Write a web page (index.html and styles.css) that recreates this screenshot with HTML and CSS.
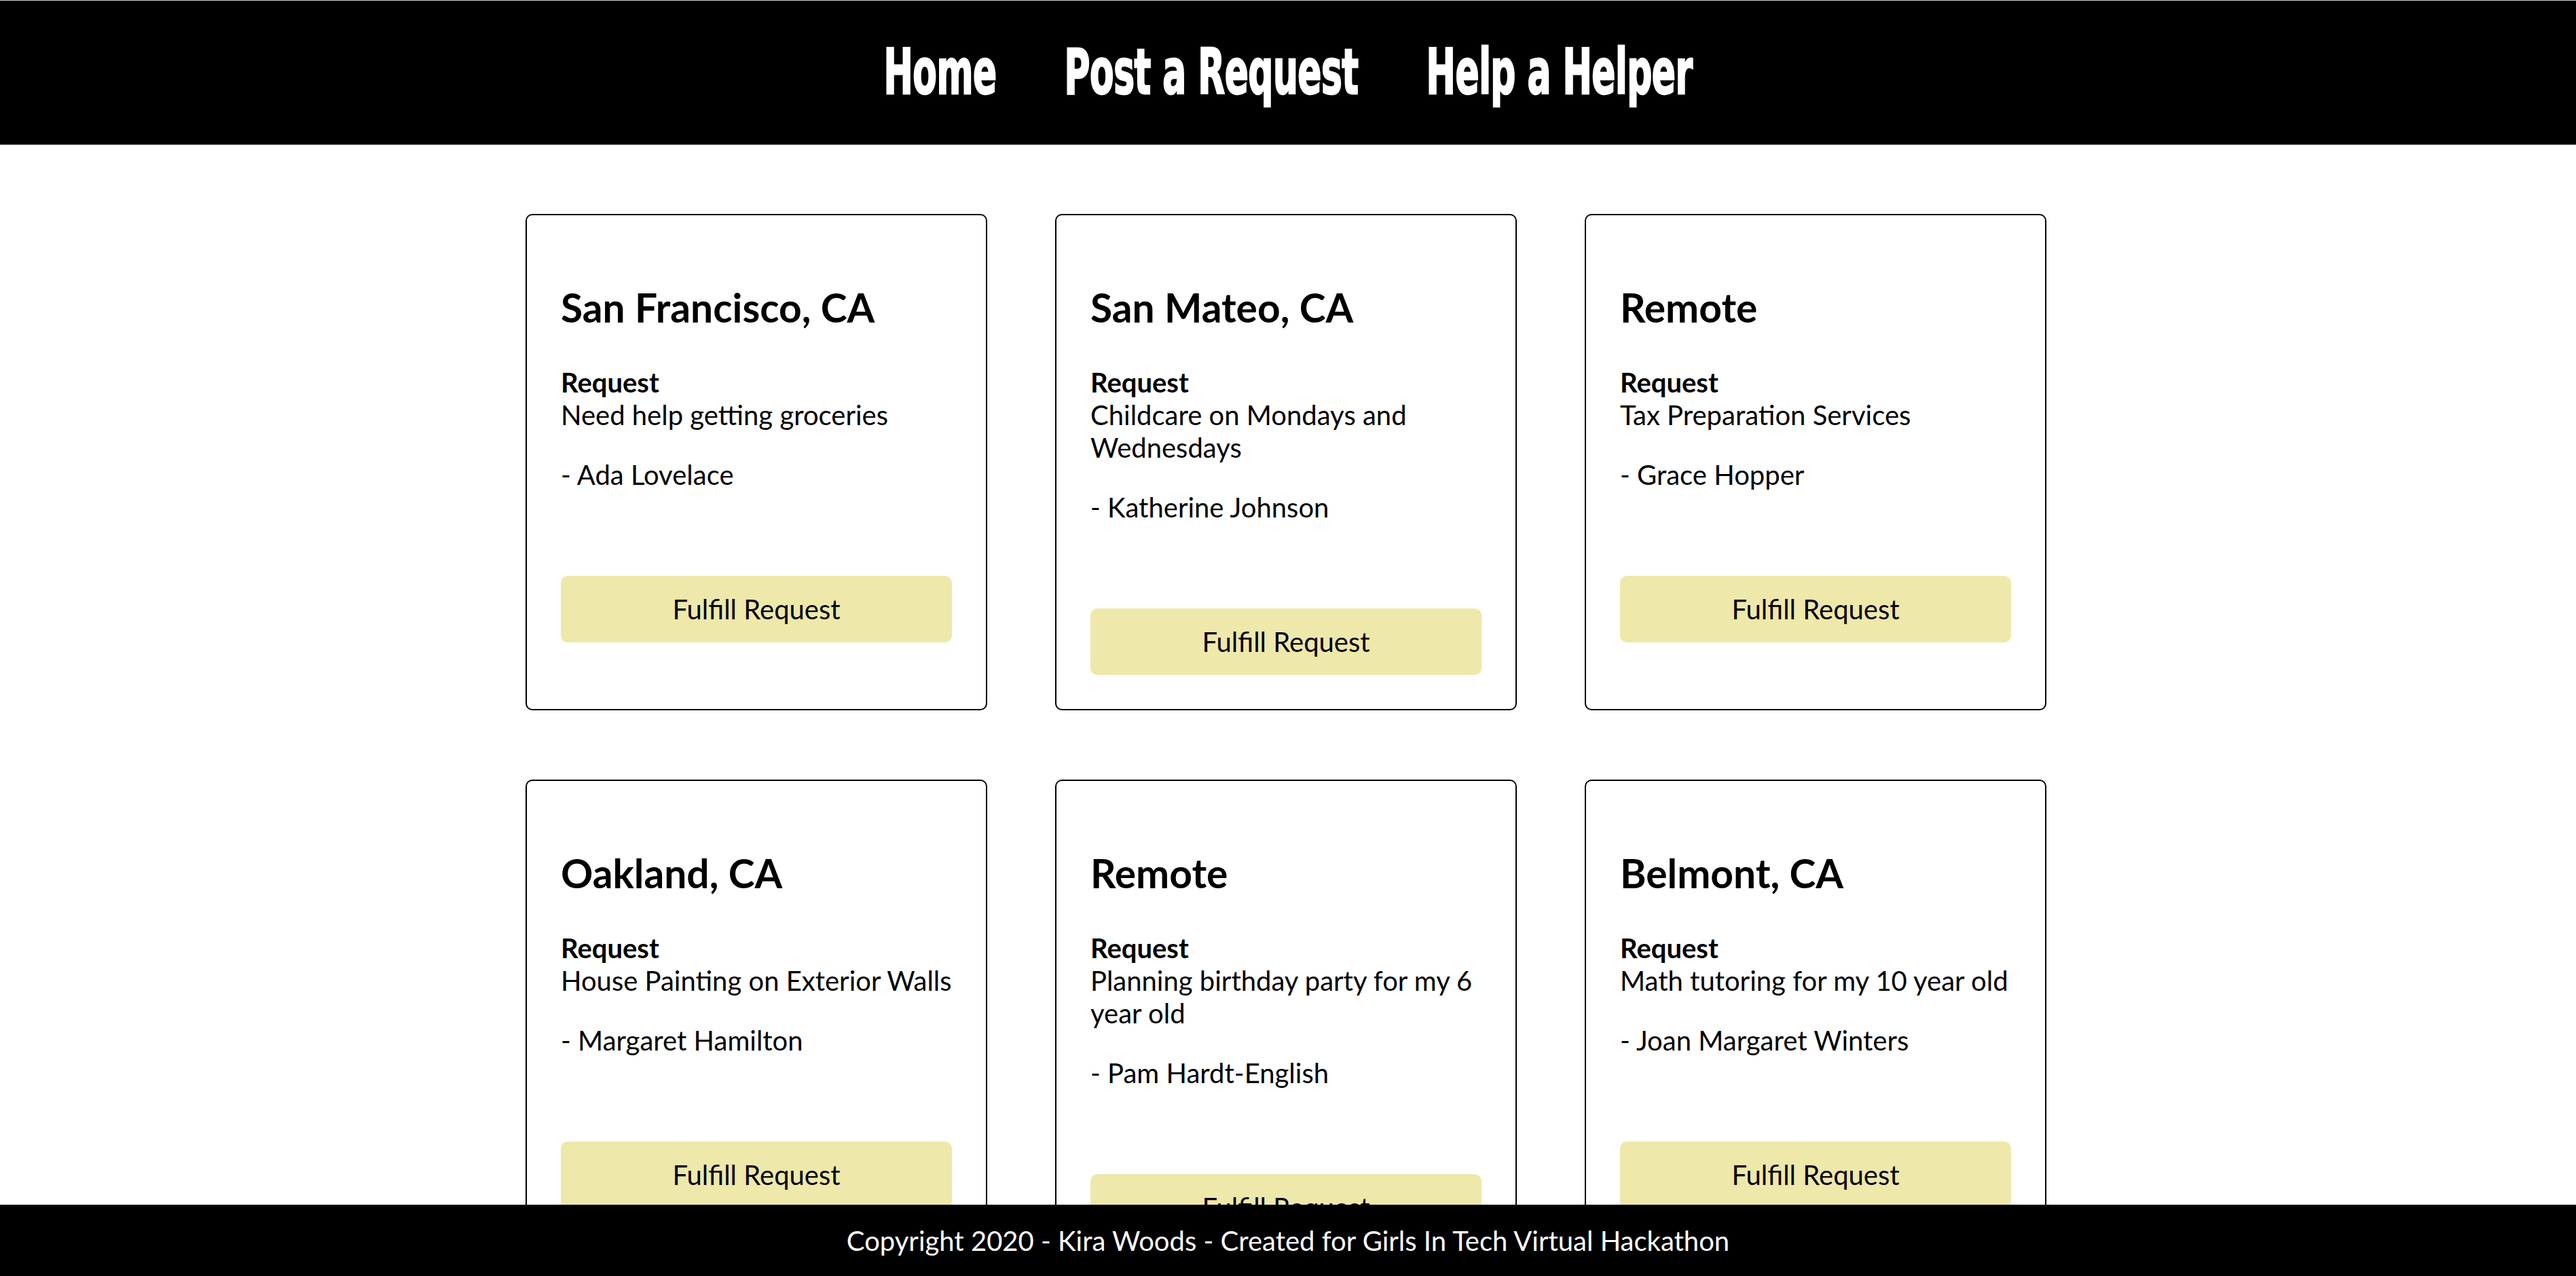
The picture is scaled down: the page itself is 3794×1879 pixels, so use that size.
FILE: index.html
```html
<!DOCTYPE html>
<html lang="en">
<head>
<meta charset="utf-8">
<title>Help a Helper</title>
<link rel="stylesheet" href="styles.css">
</head>
<body>
<header class="site-header">
  <nav class="nav">
    <a class="nav-link" href="#"><span class="nav-text">Home</span></a>
    <a class="nav-link" href="#"><span class="nav-text">Post a Request</span></a>
    <a class="nav-link" href="#"><span class="nav-text">Help a Helper</span></a>
  </nav>
</header>

<main class="requests">
  <article class="card">
    <h2 class="card-title">San Francisco, CA</h2>
    <p class="card-request"><strong>Request</strong><br>Need help getting groceries</p>
    <p class="card-author">- Ada Lovelace</p>
    <button class="fulfill">Fulfill Request</button>
  </article>
  <article class="card">
    <h2 class="card-title">San Mateo, CA</h2>
    <p class="card-request"><strong>Request</strong><br>Childcare on Mondays and Wednesdays</p>
    <p class="card-author">- Katherine Johnson</p>
    <button class="fulfill">Fulfill Request</button>
  </article>
  <article class="card">
    <h2 class="card-title">Remote</h2>
    <p class="card-request"><strong>Request</strong><br>Tax Preparation Services</p>
    <p class="card-author">- Grace Hopper</p>
    <button class="fulfill">Fulfill Request</button>
  </article>
  <article class="card">
    <h2 class="card-title">Oakland, CA</h2>
    <p class="card-request"><strong>Request</strong><br>House Painting on Exterior Walls</p>
    <p class="card-author">- Margaret Hamilton</p>
    <button class="fulfill">Fulfill Request</button>
  </article>
  <article class="card">
    <h2 class="card-title">Remote</h2>
    <p class="card-request"><strong>Request</strong><br>Planning birthday party for my 6 year old</p>
    <p class="card-author">- Pam Hardt-English</p>
    <button class="fulfill">Fulfill Request</button>
  </article>
  <article class="card">
    <h2 class="card-title">Belmont, CA</h2>
    <p class="card-request"><strong>Request</strong><br>Math tutoring for my 10 year old</p>
    <p class="card-author">- Joan Margaret Winters</p>
    <button class="fulfill">Fulfill Request</button>
  </article>
</main>

<footer class="site-footer">
  <p class="footer-text">Copyright 2020 - Kira Woods - Created for Girls In Tech Virtual Hackathon</p>
</footer>
</body>
</html>
```

FILE: styles.css
```css
html {
  scrollbar-width: none;
}
::-webkit-scrollbar {
  display: none;
}
body {
  margin: 0;
  font-family: Lato, "Open Sans", sans-serif;
  font-size: 40px;
  line-height: 48px;
  color: #000;
  background: #fff;
}

.site-header {
  height: 212px;
  background: #000;
  border-top: 1px solid #d2d2d2;
  display: flex;
  align-items: center;
  justify-content: center;
}
.nav {
  display: flex;
  align-items: center;
  gap: 100px;
}
.nav-link {
  color: #fff;
  text-decoration: none;
  font-family: "DejaVu Sans Condensed", "Liberation Sans Narrow", sans-serif;
  font-weight: bold;
  font-size: 57.6px;
  line-height: 1;
  letter-spacing: -0.5px;
  -webkit-text-stroke: 1.5px #fff;
}
.nav-text {
  display: inline-block;
  transform: scaleY(1.6);
}

.requests {
  display: grid;
  grid-template-columns: repeat(3, 680px);
  column-gap: 100px;
  row-gap: 102px;
  justify-content: center;
  padding: 102px 6px 200px 0;
}
.card {
  border: 2.5px solid #000;
  border-radius: 10px;
  padding: 50px;
  display: flex;
  flex-direction: column;
  align-items: stretch;
}
.card-title {
  margin: 50px 0;
  font-size: 58.7px;
  line-height: 72px;
  font-weight: 700;
}
.card-request {
  margin: 0 0 40px;
}
.card-author {
  margin: 0;
}
.fulfill {
  margin-top: 125px;
  padding: 25px 0;
  border: none;
  border-radius: 10px;
  background: #eee8aa;
  color: #000;
  font-family: Lato, "Open Sans", sans-serif;
  font-size: 40px;
  line-height: 48px;
}

.site-footer {
  position: fixed;
  left: 0;
  right: 0;
  bottom: 0;
  height: 105px;
  background: #000;
  color: #fff;
  display: flex;
  align-items: center;
  justify-content: center;
}
.footer-text {
  margin: 0;
  font-size: 40px;
  line-height: 48px;
}
```
